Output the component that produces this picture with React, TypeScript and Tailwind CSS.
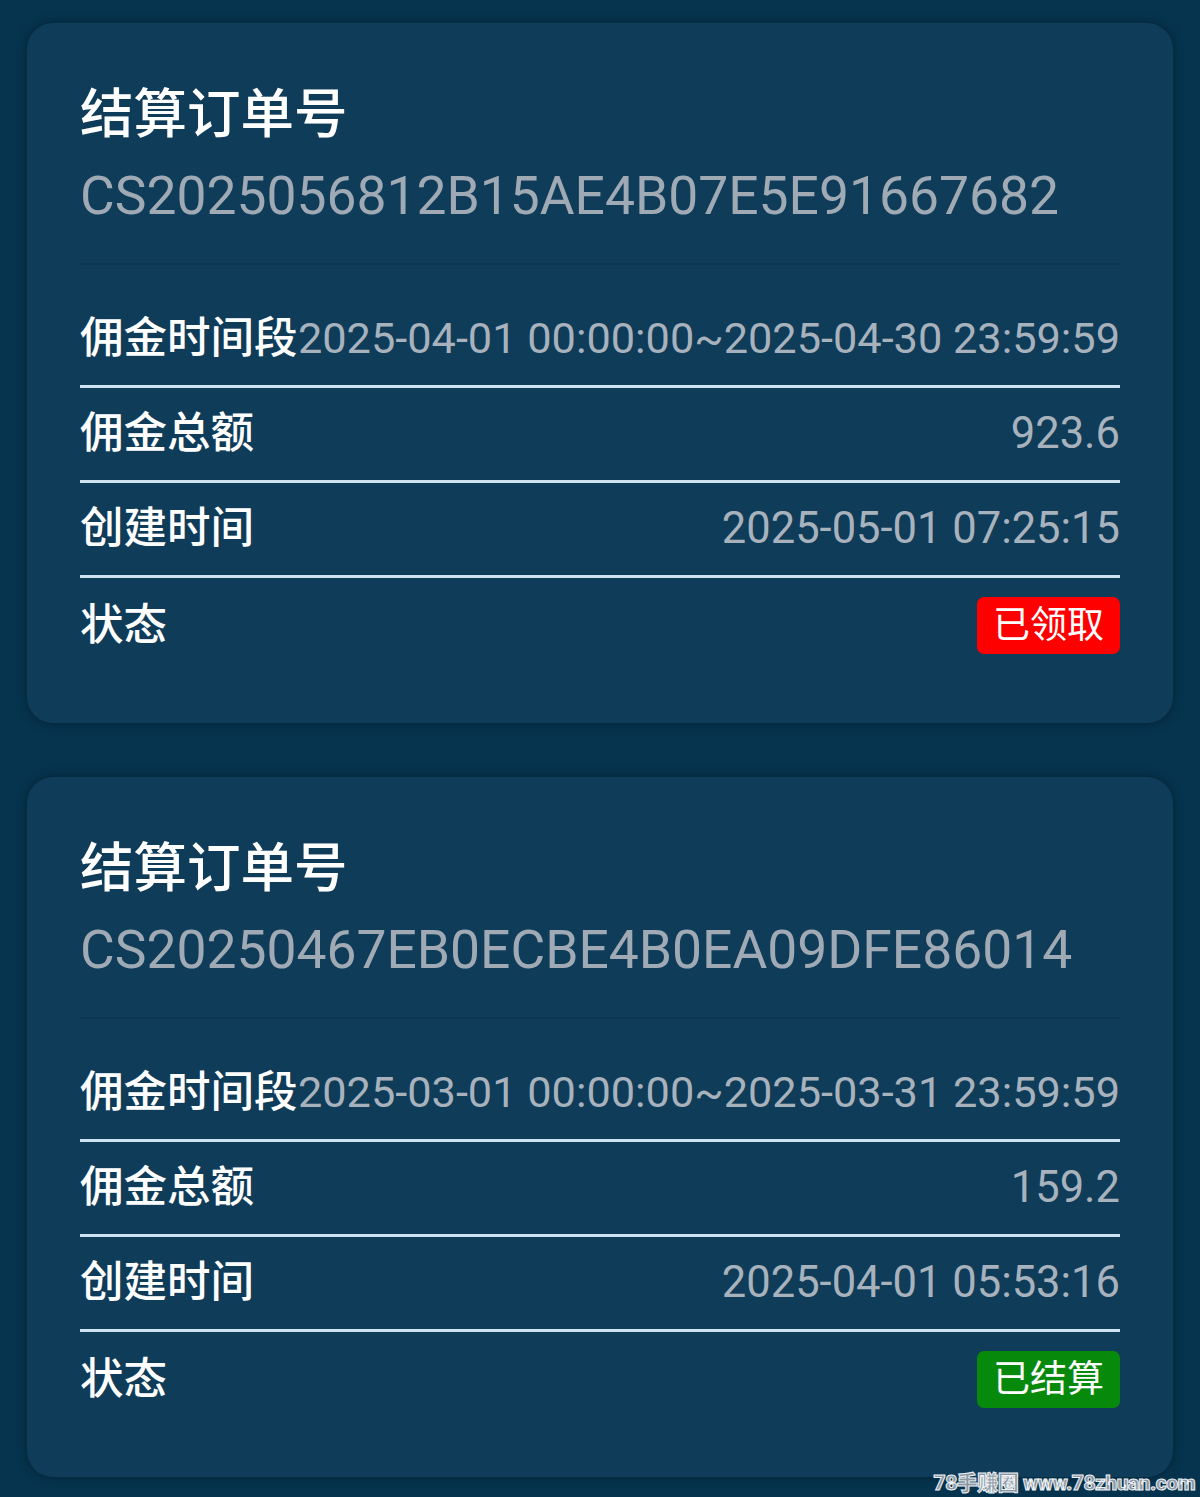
import type { ReactNode } from 'react';

interface Settlement {
  orderNo: string;
  period: string;
  total: string;
  createdAt: string;
  status: 'claimed' | 'settled';
}

const SETTLEMENTS: Settlement[] = [
  {
    orderNo: 'CS2025056812B15AE4B07E5E91667682',
    period: '2025-04-01 00:00:00~2025-04-30 23:59:59',
    total: '923.6',
    createdAt: '2025-05-01 07:25:15',
    status: 'claimed',
  },
  {
    orderNo: 'CS20250467EB0ECBE4B0EA09DFE86014',
    period: '2025-03-01 00:00:00~2025-03-31 23:59:59',
    total: '159.2',
    createdAt: '2025-04-01 05:53:16',
    status: 'settled',
  },
];

function Row({ label, children, last }: { label: string; children: ReactNode; last?: boolean }) {
  return (
    <div
      className={`flex h-[95px] items-center justify-between ${
        last ? '' : 'border-b-[3px] border-[#cfe2f2]'
      }`}
    >
      <span className="text-[43.5px] leading-none font-medium whitespace-nowrap text-white">
        {label}
      </span>
      {children}
    </div>
  );
}

function StatusBadge({ status }: { status: Settlement['status'] }) {
  const claimed = status === 'claimed';
  return (
    <span
      className={`flex h-[57px] w-[143px] items-center justify-center rounded-[7px] text-[37px] leading-none text-white ${
        claimed ? 'bg-[#ff0000]' : 'bg-[#078a0c]'
      }`}
    >
      {claimed ? '已领取' : '已结算'}
    </span>
  );
}

function SettlementCard({ item }: { item: Settlement }) {
  return (
    <div className="rounded-[26px] bg-[#0f3c59] px-[53px] pt-[62px] pb-[50px] shadow-[0_0_10px_rgba(0,20,35,0.55)]">
      <div className="text-[53.5px] leading-[60px] font-medium text-white">结算订单号</div>
      <div className="mt-[21px] text-[53.4px] leading-[60px] whitespace-nowrap text-[#a0aab5]">
        {item.orderNo}
      </div>
      <div className="mt-[37px] h-[2px] bg-[#0b3551]" />
      <div className="mt-[28px]">
        <Row label="佣金时间段">
          <span className="text-[43.3px] leading-none whitespace-nowrap text-[#a8b2bd]">
            {item.period}
          </span>
        </Row>
        <Row label="佣金总额">
          <span className="text-[43.5px] leading-none text-[#a8b2bd]">{item.total}</span>
        </Row>
        <Row label="创建时间">
          <span className="text-[43.5px] leading-none text-[#a8b2bd]">{item.createdAt}</span>
        </Row>
        <Row label="状态" last>
          <StatusBadge status={item.status} />
        </Row>
      </div>
    </div>
  );
}

export default function App() {
  return (
    <div
      className="relative flex min-h-[1497px] w-[1200px] flex-col gap-[54px] bg-[#06344e] px-[27px] pt-[23px] pb-[22px]"
      style={{ fontFamily: 'Roboto, "Noto Sans CJK SC", sans-serif' }}
    >
      {SETTLEMENTS.map((item) => (
        <SettlementCard key={item.orderNo} item={item} />
      ))}
      <div className="absolute right-[5px] bottom-[5px] text-[21px] leading-none font-black tracking-tight text-[#8a96a2] [-webkit-text-stroke:1px_#eef2f5]">
        78手赚圈 www.78zhuan.com
      </div>
    </div>
  );
}
